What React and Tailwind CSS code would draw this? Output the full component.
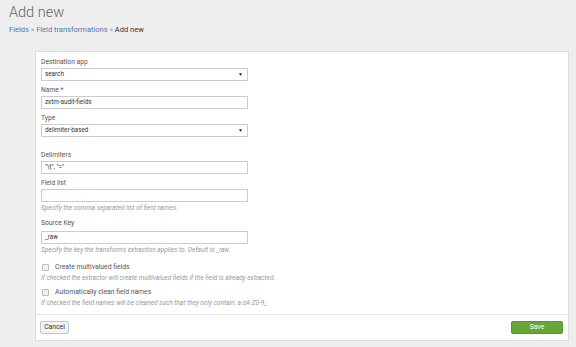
import React from "react";

const Label = ({ children, className = "" }) => (
  <div className={`text-[6.7px] leading-[11px] text-[#555] ${className}`}>{children}</div>
);

const Help = ({ children, className = "" }) => (
  <div className={`text-[6.5px] leading-[9px] italic text-[#999] ${className}`}>{children}</div>
);

const TextBox = ({ value }) => (
  <div className="w-[207px] h-[13px] border border-[#ccc] bg-white px-[3px] flex items-center text-[6.3px] text-[#333]">
    {value}
  </div>
);

const SelectBox = ({ value }) => (
  <div className="w-[207px] h-[13px] border border-[#ccc] bg-white pl-[3px] pr-[4px] flex items-center justify-between text-[6.3px] text-[#333]">
    <span>{value}</span>
    <span className="text-[5px] text-[#222]">▼</span>
  </div>
);

const Check = ({ children }) => (
  <div className="flex items-center gap-[6px] h-[12px] pl-[1px]">
    <div className="w-[7px] h-[7px] border border-[#bbb] rounded-[1px] bg-[#f3f3f3]" />
    <span className="text-[6.8px] text-[#555]">{children}</span>
  </div>
);

const App = () => {
  return (
    <div className="min-h-screen bg-[#eeeeee] font-['Roboto',sans-serif] pb-[5px]">
      <div className="px-[9px] pt-[3px]">
        <h1 className="text-[14.5px] font-light leading-[20px] text-[#666]">Add new</h1>
        <div className="text-[7.5px] leading-[9px] mt-[2px] text-[#333]">
          <span className="text-[#5379af]">Fields</span>
          <span className="text-[#999]"> » </span>
          <span className="text-[#5379af]">Field transformations</span>
          <span className="text-[#999]"> » </span>
          <span>Add new</span>
        </div>
      </div>

      <div className="ml-[35px] mr-[7px] mt-[17px] bg-white border border-[#dcdcdc]">
        <div className="px-[5px] pt-[5px] pb-[6px]">
          <Label>Destination app</Label>
          <SelectBox value="search" />

          <Label className="mt-[4px]">Name *</Label>
          <TextBox value="zxtm-audit-fields" />

          <Label className="mt-[4px]">Type</Label>
          <SelectBox value="delimiter-based" />

          <Label className="mt-[13px]">Delimiters</Label>
          <TextBox value={'"\\t", "="'} />

          <Label className="mt-[4px]">Field list</Label>
          <TextBox value="" />
          <Help className="mt-[2px]">Specify the comma separated list of field names.</Help>

          <Label className="mt-[5px] mb-[2px]">Source Key</Label>
          <TextBox value="_raw" />
          <Help className="mt-[2px]">Specify the key the transforms extraction applies to. Default is _raw.</Help>

          <div className="mt-[6px]">
            <Check>Create multivalued fields</Check>
          </div>
          <Help className="mt-[1px]">If checked the extractor will create multivalued fields if the field is already extracted.</Help>

          <div className="mt-[3px]">
            <Check>Automatically clean field names</Check>
          </div>
          <Help className="mt-[1px]">If checked the field names will be cleaned such that they only contain: a-zA-Z0-9_</Help>
        </div>

        <div className="border-t border-[#e4e4e4] flex items-center justify-between pl-[4px] pr-[5px] py-[6px]">
          <button className="h-[13px] w-[29px] rounded-[2px] border border-[#c6c6c6] bg-[#f4f4f4] text-[6.8px] text-[#333]">
            Cancel
          </button>
          <button className="h-[13px] w-[52px] rounded-[2px] border border-[#5a9532] bg-[#65a637] text-[6.8px] text-white">
            Save
          </button>
        </div>
      </div>
    </div>
  );
};

export default App;
